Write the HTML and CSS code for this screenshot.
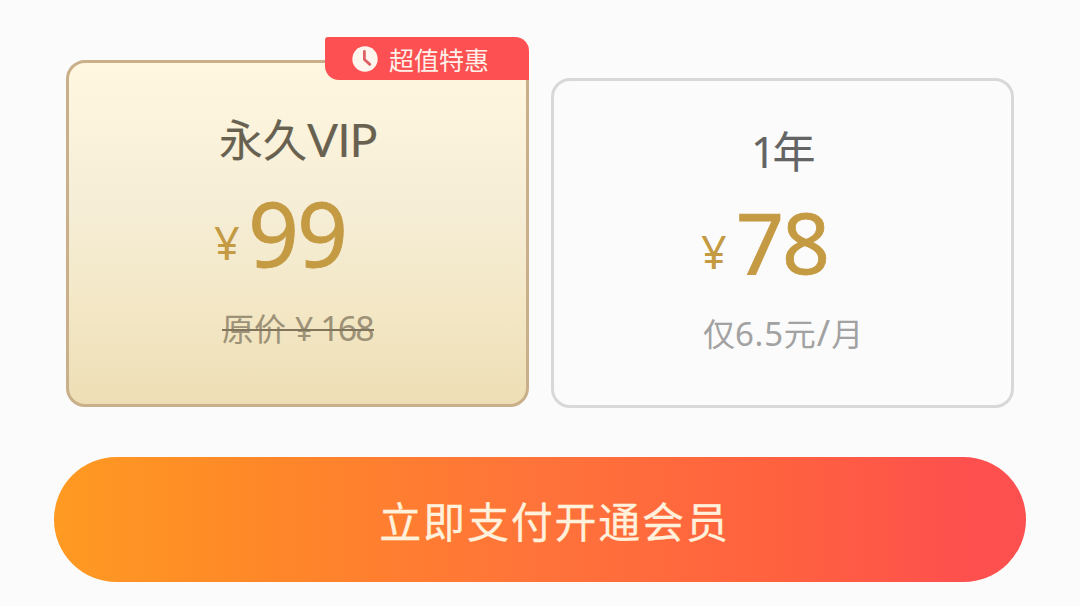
FILE: index.html
```html
<!DOCTYPE html>
<html lang="zh-CN">
<head>
<meta charset="utf-8">
<title>开通会员</title>
<link rel="stylesheet" href="styles.css">
</head>
<body>
<main class="page">
  <div class="plans">
    <section class="card card-active">
      <div class="badge">
        <svg class="clock" viewBox="0 0 26 26"><circle cx="13" cy="13" r="12.7" fill="#fff5ef"/><path d="M12.4 5.5V13.5L17.8 18.4" fill="none" stroke="#dc6265" stroke-width="2.8" stroke-linecap="round" stroke-linejoin="round"/></svg>
        <span class="badge-text">超值特惠</span>
      </div>
      <h2 class="name">永久<span class="vip">VIP</span></h2>
      <div class="price"><span class="yen">¥</span><span class="amount">99</span></div>
      <div class="original"><span>原价</span><span class="original-yen">¥</span><span class="original-num">168</span></div>
    </section>
    <section class="card card-year">
      <h2 class="name">1年</h2>
      <div class="price"><span class="yen">¥</span><span class="amount">78</span></div>
      <div class="monthly">仅<span class="rate">6.5</span>元<span class="slash">/</span>月</div>
    </section>
  </div>
  <button class="pay">立即支付开通会员</button>
</main>
</body>
</html>
```
FILE: styles.css
```css
* { box-sizing: border-box; }
body {
  margin: 0;
  background: #fbfbfb;
  font-family: "Noto Sans", "Noto Sans CJK SC", sans-serif;
}
.page {
  width: 1080px;
  height: 606px;
  overflow: hidden;
  padding: 60px 54px 0;
}
.plans {
  display: flex;
  align-items: flex-end;
  gap: 22px;
  height: 348px;
  padding-left: 12px;
}
.card {
  position: relative;
  width: 463px;
  border-radius: 19px;
}
.card-active {
  height: 347px;
  margin-bottom: 1px;
  padding: 47px 0 0 145px;
  border: 3px solid #c9b08a;
  background: linear-gradient(#fff7e0, #f5edd6 43%, #f3e7c5 72%, #eddeb5);
}
.card-year {
  height: 330px;
  padding: 41px 0 0 147px;
  border: 3px solid #d8d8d8;
  background: #fbfbfb;
}
.badge {
  position: absolute;
  top: -26px;
  right: -3px;
  width: 204px;
  height: 43px;
  padding-left: 27px;
  display: flex;
  align-items: center;
  gap: 11px;
  border-radius: 3px 14px 0 14px;
  background: #fc5052;
  color: #fff1e9;
}
.clock { width: 26px; height: 26px; }
.badge-text { padding-top: 3px; font-size: 25px; line-height: 43px; }
.name {
  display: flex;
  align-items: baseline;
  margin: 0;
  height: 60px;
  line-height: 60px;
  font-weight: 400;
  white-space: nowrap;
  -webkit-text-stroke: 0.15px;
}
.card-active .name { padding-left: 5px; font-size: 44px; color: #686150; }
.vip { font-family: Lato, sans-serif; font-size: 46px; letter-spacing: -0.6px; }
.card-year .name { padding-left: 50px; font-size: 43px; letter-spacing: -3px; color: #646464; }
.price {
  display: flex;
  align-items: baseline;
  height: 90px;
  margin-top: 18px;
  line-height: 90px;
  color: #c49a43;
  white-space: nowrap;
}
.card-year .price { margin-top: 15px; }
.yen { font-size: 45px; width: 35px; transform: translateY(-7px); }
.card-year .yen { transform: translateY(-5px); }
.amount { font-size: 89px; letter-spacing: -2px; -webkit-text-stroke: 0.8px; }
.card-active .amount { margin-left: -1px; }
.card-year .amount { font-size: 84px; }
.original {
  position: relative;
  display: flex;
  align-items: baseline;
  width: 152px;
  height: 44px;
  margin: 28px 0 0 8px;
  line-height: 44px;
  font-size: 32px;
  color: #9d9278;
  white-space: nowrap;
}
.original::after {
  content: "";
  position: absolute;
  left: 0;
  right: 0;
  top: 23px;
  height: 2px;
  background: #81765d;
}
.original-yen { margin-left: 9px; }
.original-num { margin-left: 7px; font-size: 34px; letter-spacing: -2px; }
.monthly {
  display: flex;
  align-items: baseline;
  height: 44px;
  margin: 24px 0 0 2px;
  line-height: 44px;
  font-size: 32px;
  color: #a2a2a2;
  white-space: nowrap;
}
.rate { font-size: 33px; letter-spacing: 0.7px; }
.slash { font-size: 36px; margin: 0 1px; }
.pay {
  display: block;
  width: 972px;
  height: 125px;
  margin: 49px 0 0;
  padding: 4px 0 0 29px;
  border: 0;
  border-radius: 63px;
  background: linear-gradient(90deg, #ff9a22, #ff8728 22%, #ff733a 50%, #ff613f 75%, #fd504e 94%, #fc5050);
  color: #fff1dc;
  font: 400 42px/121px "Noto Sans", "Noto Sans CJK SC", sans-serif;
  letter-spacing: 1.8px;
  -webkit-text-stroke: 0.3px;
}
```
